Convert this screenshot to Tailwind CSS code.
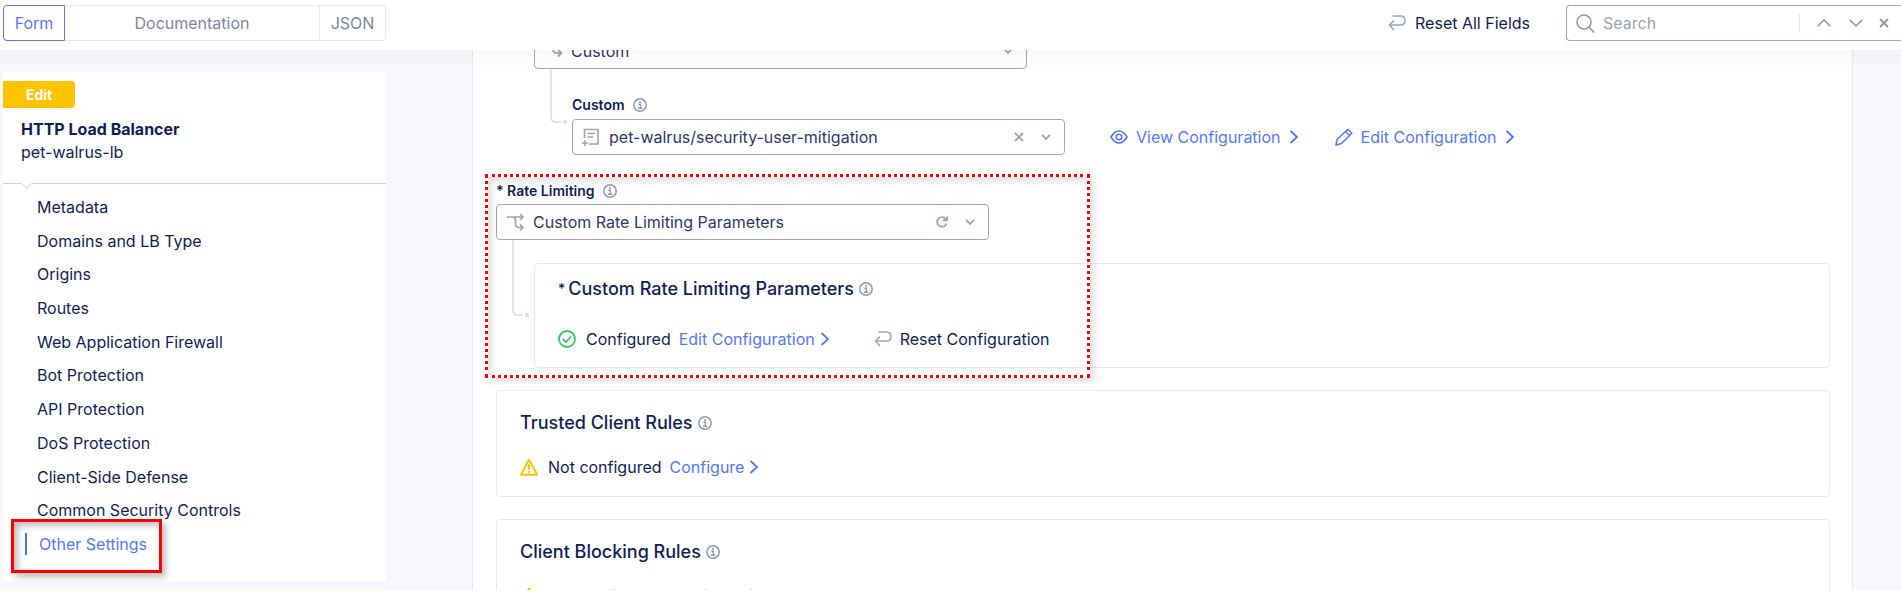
<!DOCTYPE html>
<html lang="en">
<head>
<meta charset="utf-8">
<title>HTTP Load Balancer</title>
<script src="https://cdn.jsdelivr.net/npm/@tailwindcss/browser@4"></script>
</head>
<body class="h-screen overflow-hidden bg-white pb-[11px] font-['Inter',sans-serif] text-base leading-6 text-[#0f1e57]">
<svg class="hidden" aria-hidden="true">
  <symbol id="info" viewBox="0 0 14 14" fill="none" stroke="currentColor"><circle cx="7" cy="7" r="6.200" stroke-width="1.5"/><path d="M5.400 6.200H7.300V10M5 10.300H9.400" stroke-width="1.4"/><circle cx="7" cy="3.900" r="1" fill="currentColor" stroke="none"/></symbol>
  <symbol id="chev" viewBox="0 0 10 14" fill="none" stroke="currentColor"><path d="M1.500 1L8 7L1.500 13" stroke-width="1.8"/></symbol>
  <symbol id="down" viewBox="0 0 10 6" fill="none" stroke="currentColor"><path d="M1 .8L5 4.800L9 .8" stroke-width="1.9"/></symbol>
  <symbol id="reset" viewBox="0 0 18 16" fill="none" stroke="currentColor"><path d="M4.500 1H12.500Q17 1 17 5.500T12.500 10H1.500M6 5.500L1.500 10L6 15" stroke-width="1.5"/></symbol>
  <symbol id="warn" viewBox="0 0 18 18" fill="none" stroke="currentColor"><path d="M9 1.500L17 16.800H1Z" stroke-width="2" stroke-linejoin="round"/><path d="M9 6.500V11.800M9 13V14.800" stroke-width="2"/></symbol>
</svg>
<div class="flex h-full flex-col overflow-hidden">
  <header class="relative z-10 flex shrink-0 items-start justify-between bg-white pt-[5px] pb-[9px] pl-[3px]">
    <div class="flex h-9 w-[383px] text-[#7b869e]" role="group" aria-label="View">
      <button class="w-[62px] rounded-l border border-[#5577fb] text-[#5577fb]">Form</button>
      <button class="flex-1 border-y border-r border-[#e6e8f5]">Documentation</button>
      <button class="w-[66px] rounded-r border-y border-r border-[#e6e8f5]">JSON</button>
    </div>
    <div class="flex items-start">
      <button class="mr-9 flex h-9 items-center gap-[9px]"><svg class="h-4 w-[18px] text-[#9aa5ba]"><use href="#reset"/></svg>Reset All Fields</button>
      <div class="flex h-9 w-[335px] items-center rounded-l border border-r-0 border-[#9ba6bd] text-[#8b96ab]">
        <svg class="ml-[9px] h-[19px] w-[19px] shrink-0" viewBox="0 0 19 19" fill="none" stroke="currentColor" stroke-width="1.500"><circle cx="8" cy="8" r="7"/><path d="M13 13L18 18.500"/></svg>
        <input class="ml-2 min-w-0 flex-1 outline-none placeholder:text-[#9aa3b6]" type="text" placeholder="Search" aria-label="Search">
        <span class="h-[18px] w-px bg-[#dfe3ec]"></span>
        <button class="ml-[17px]" aria-label="Previous match"><svg class="h-2 w-[14px]" viewBox="0 0 14 8" fill="none" stroke="currentColor" stroke-width="1.500"><path d="M.7 7.300L7 1L13.300 7.300"/></svg></button>
        <button class="ml-[18px]" aria-label="Next match"><svg class="h-2 w-[14px]" viewBox="0 0 14 8" fill="none" stroke="currentColor" stroke-width="1.500"><path d="M.7.7L7 7L13.300.7"/></svg></button>
        <button class="mr-3 ml-4" aria-label="Close search"><svg class="h-[10px] w-[10px]" viewBox="0 0 10 10" fill="none" stroke="currentColor" stroke-width="1.800"><path d="M1 1L9 9M9 1L1 9"/></svg></button>
      </div>
    </div>
  </header>
  <div class="relative flex min-h-0 flex-1 bg-[#f6f8fb] pl-[3px]">
    <div class="pointer-events-none absolute inset-x-0 top-0 z-10 h-5 bg-linear-to-b from-black/2 to-transparent"></div>
    <aside class="mt-[22px] mb-[9px] flex w-[383px] shrink-0 flex-col rounded bg-white pt-[9px]">
      <div class="flex h-[27px] w-[72px] shrink-0 items-center justify-center rounded-r bg-[#ffc400] text-sm font-bold text-white">Edit</div>
      <h1 class="mt-[9px] pl-[18px] font-bold">HTTP Load Balancer</h1>
      <p class="pl-[18px] leading-[22px]">pet-walrus-lb</p>
      <svg class="mt-5 h-[7px] w-full shrink-0 text-[#cbd1df]" fill="none" stroke="currentColor"><path d="M0 .5H18.500L23.500 5.500L28.500 .5H2000"/></svg>
      <nav class="flex flex-1 flex-col items-start justify-between pt-[6px] pb-[26px] leading-[22px]">
        <a href="#" class="pl-[34px]">Metadata</a>
        <a href="#" class="pl-[34px]">Domains and LB Type</a>
        <a href="#" class="pl-[34px]">Origins</a>
        <a href="#" class="pl-[34px]">Routes</a>
        <a href="#" class="pl-[34px]">Web Application Firewall</a>
        <a href="#" class="pl-[34px]">Bot Protection</a>
        <a href="#" class="pl-[34px]">API Protection</a>
        <a href="#" class="pl-[34px]">DoS Protection</a>
        <a href="#" class="pl-[34px]">Client-Side Defense</a>
        <a href="#" class="pl-[34px]">Common Security Controls</a>
        <a href="#" class="relative ml-[22px] border-l-2 border-[#4b6ef5] pl-3 text-[#5577fb]">Other Settings<span class="absolute -top-[14px] -right-[15px] -bottom-[18px] -left-4 border-3 border-[#fe0000] shadow-[4px_4px_6px_rgba(0,0,0,0.25),inset_4px_4px_6px_rgba(0,0,0,0.25)]"></span></a>
      </nav>
    </aside>
    <main class="mr-12 ml-[86px] flex-1 overflow-hidden border-x border-[#e6e9f2] bg-white pr-[22px] pl-[23px]">
      <section class="pl-[38px]">
        <div class="-mt-[17px] flex h-9 w-[493px] items-center rounded border border-[#9ba6bd] pr-3 pl-4 text-[#9ba6bd]">
          <svg class="h-4 w-4" viewBox="0 0 16 16" fill="none" stroke="currentColor" stroke-width="1.800"><path d="M2 1V6Q2 10 6 10H10M7 6.500L10.500 10L7 13.500"/></svg>
          <span class="ml-1 flex-1 text-[#2b3869]">Custom</span>
          <button class="px-px" aria-label="Open list"><svg class="h-[6px] w-[10px]"><use href="#down"/></svg></button>
        </div>
        <div class="relative pt-[25px] pl-[38px]">
          <svg class="absolute top-0 left-4 h-14 w-5 text-[#d7dcea]" fill="none" stroke="currentColor" stroke-width="1.500"><path d="M1 0V48Q1 53 6 53H11"/><circle cx="15" cy="53" r="2" fill="currentColor" stroke="none"/></svg>
          <div class="flex h-[25px] items-center gap-2 pb-[3px] text-sm font-semibold">Custom<svg class="h-[14px] w-[14px] text-[#8e9ab0]"><use href="#info"/></svg></div>
          <div class="flex items-center">
            <div class="flex h-9 w-[493px] items-center rounded border border-[#9ba6bd] pr-3 pl-2 text-[#9ba6bd]">
              <svg class="h-[18px] w-[18px]" viewBox="0 0 18 18" fill="none" stroke="currentColor" stroke-width="1.600"><path d="M3.500 10V1.500H17V16H8M6.500 5.500H14M6.500 9H12M4 12V18M1 15H7"/></svg>
              <span class="ml-[10px] flex-1 text-[#2b3869]">pet-walrus/security-user-mitigation</span>
              <button aria-label="Clear"><svg class="h-[10px] w-[10px]" viewBox="0 0 10 10" fill="none" stroke="currentColor" stroke-width="1.800"><path d="M1 1L9 9M9 1L1 9"/></svg></button>
              <button class="ml-4 px-px" aria-label="Open list"><svg class="h-[6px] w-[10px]"><use href="#down"/></svg></button>
            </div>
            <a href="#" class="ml-[45px] flex items-center text-[#5577fb]"><svg class="mr-2 h-[14px] w-[18px]" viewBox="0 0 18 14" fill="none" stroke="currentColor" stroke-width="1.600"><path d="M1 7Q4.500 1 9 1T17 7Q13.500 13 9 13T1 7Z"/><circle cx="9" cy="7" r="2.800"/></svg>View Configuration<svg class="ml-2 h-[14px] w-[10px]"><use href="#chev"/></svg></a>
            <a href="#" class="ml-9 flex items-center text-[#5577fb]"><svg class="mr-2 h-[18px] w-[18px]" viewBox="0 0 18 18" fill="none" stroke="currentColor" stroke-width="1.500" stroke-linejoin="round"><path d="M1 17L2 11.500L12.800 1.200L16.800 5.200L6.500 15.500ZM10.500 3.500L14.500 7.500"/></svg>Edit Configuration<svg class="ml-2 h-[14px] w-[10px]"><use href="#chev"/></svg></a>
          </div>
        </div>
      </section>
      <section class="relative mt-[23px]">
        <div class="flex h-[26px] items-center gap-2 pb-px text-sm font-semibold">* Rate Limiting<svg class="h-[14px] w-[14px] text-[#8e9ab0]"><use href="#info"/></svg></div>
        <div class="flex h-9 w-[493px] items-center rounded border border-[#9ba6bd] pr-3 pl-[10px] text-[#9ba6bd]">
          <svg class="h-[18px] w-[18px]" viewBox="0 0 18 18" fill="none" stroke="currentColor" stroke-width="1.700"><path d="M0 4H16M5 4Q8.500 4 8.500 7V11Q8.500 14.500 12 14.500H16M13 1L16 4L13 7M13 11.500L16 14.500L13 17.500"/></svg>
          <span class="ml-2 flex-1 text-[#2b3869]">Custom Rate Limiting Parameters</span>
          <button aria-label="Restore default"><svg class="h-3 w-3" viewBox="0 0 12 12" fill="none" stroke="currentColor" stroke-width="1.900"><path d="M9.800 3A4.800 4.800 0 1 0 10.500 7.500M11 .5V4.200H6.800"/></svg></button>
          <button class="ml-4 px-px" aria-label="Open list"><svg class="h-[6px] w-[10px]"><use href="#down"/></svg></button>
        </div>
        <svg class="absolute top-[62px] left-4 h-20 w-5 text-[#d7dcea]" fill="none" stroke="currentColor" stroke-width="1.500"><path d="M1 0V70Q1 75 6 75H11"/><circle cx="15" cy="75" r="2" fill="currentColor" stroke="none"/></svg>
        <div class="mt-[23px] ml-[38px] h-[105px] rounded border border-[#e6e8f4] px-[23px] pt-[11px]">
          <h2 class="flex items-center text-lg font-medium"><span class="mr-[3px] text-sm">*</span>Custom Rate Limiting Parameters<svg class="ml-[5px] h-[14px] w-[14px] text-[#8e9ab0]"><use href="#info"/></svg></h2>
          <div class="mt-6 flex items-center">
            <svg class="mr-[10px] h-[18px] w-[18px] text-[#2ecc62]" viewBox="0 0 18 18" fill="none" stroke="currentColor" stroke-width="1.800"><circle cx="9" cy="9" r="8"/><path d="M5 9L8 12L13 6.500"/></svg>
            Configured
            <a href="#" class="ml-2 flex items-center text-[#5577fb]">Edit Configuration<svg class="ml-[5px] h-[14px] w-[10px]"><use href="#chev"/></svg></a>
            <button class="ml-11 flex items-center"><svg class="mr-2 h-4 w-[18px] text-[#9aa5ba]"><use href="#reset"/></svg>Reset Configuration</button>
          </div>
        </div>
        <div class="pointer-events-none absolute -top-1 -left-[11px] h-[204px] w-[605px] border-3 border-dotted border-[#fe0000] shadow-[4px_4px_6px_rgba(0,0,0,0.12),inset_4px_4px_6px_rgba(0,0,0,0.12)]"></div>
      </section>
      <section class="mt-[22px] h-[107px] rounded border border-[#e6e8f4] px-[23px] pt-[18px]">
        <h2 class="flex items-center text-lg font-medium">Trusted Client Rules<svg class="ml-[5px] h-[14px] w-[14px] text-[#8e9ab0]"><use href="#info"/></svg></h2>
        <div class="mt-[18px] flex items-center"><svg class="mr-[10px] h-[18px] w-[18px] text-[#ffc400]"><use href="#warn"/></svg>Not configured<a href="#" class="ml-2 flex items-center text-[#5577fb]">Configure<svg class="ml-[5px] h-[14px] w-[10px]"><use href="#chev"/></svg></a></div>
      </section>
      <section class="mt-[22px] h-[107px] rounded border border-[#e6e8f4] px-[23px] pt-[18px]">
        <h2 class="flex items-center text-lg font-medium">Client Blocking Rules<svg class="ml-[5px] h-[14px] w-[14px] text-[#8e9ab0]"><use href="#info"/></svg></h2>
        <div class="mt-[18px] flex items-center"><svg class="mr-[10px] h-[18px] w-[18px] text-[#ffc400]"><use href="#warn"/></svg>Not configured<a href="#" class="ml-2 flex items-center text-[#5577fb]">Configure<svg class="ml-[5px] h-[14px] w-[10px]"><use href="#chev"/></svg></a></div>
      </section>
    </main>
  </div>
</div>
</body>
</html>
